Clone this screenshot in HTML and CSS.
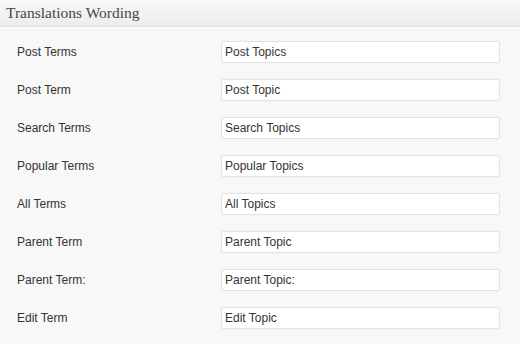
FILE: index.html
```html
<!DOCTYPE html>
<html lang="en">
<head>
    <meta charset="UTF-8">
    <title>Translations Wording</title>
    <link rel="stylesheet" href="styles.css">
</head>
<body>

<div class="postbox">
    <h3 class="postbox-title">Translations Wording</h3>

    <div class="wording-form">
        <label class="field-label" for="w1">Post Terms</label>
        <input class="field-input" id="w1" type="text" value="Post Topics">

        <label class="field-label" for="w2">Post Term</label>
        <input class="field-input" id="w2" type="text" value="Post Topic">

        <label class="field-label" for="w3">Search Terms</label>
        <input class="field-input" id="w3" type="text" value="Search Topics">

        <label class="field-label" for="w4">Popular Terms</label>
        <input class="field-input" id="w4" type="text" value="Popular Topics">

        <label class="field-label" for="w5">All Terms</label>
        <input class="field-input" id="w5" type="text" value="All Topics">

        <label class="field-label" for="w6">Parent Term</label>
        <input class="field-input" id="w6" type="text" value="Parent Topic">

        <label class="field-label" for="w7">Parent Term:</label>
        <input class="field-input" id="w7" type="text" value="Parent Topic:">

        <label class="field-label" for="w8">Edit Term</label>
        <input class="field-input" id="w8" type="text" value="Edit Topic">
    </div>
</div>

</body>
</html>
```

FILE: styles.css
```css
/* Boîte type WordPress */
body {
    margin: 0;
    padding: 0;
    background-color: #f8f8f8;
    font-family: 'Liberation Sans', Arial, sans-serif;
    color: #333;
}

.postbox {
    background-color: #f8f8f8;
}

.postbox-title {
    margin: 0;
    height: 26px;
    padding-left: 6px;
    line-height: 26px;
    font-family: 'Liberation Serif', Georgia, serif;
    font-size: 15.5px;
    font-weight: normal;
    color: #464646;
    background: linear-gradient(to bottom, #f9f9f9, #ececec);
    border-bottom: 1px solid #dfdfdf;
    box-shadow: 0 1px 0 #fff;
}

.wording-form {
    display: grid;
    grid-template-columns: 204px 279px;
    grid-auto-rows: 38px;
    align-items: center;
    padding: 6px 0 0 17px;
}

.field-label {
    font-size: 12px;
}

.field-input {
    box-sizing: border-box;
    height: 22px;
    margin: 0;
    padding: 0 3px;
    font-family: 'Liberation Sans', Arial, sans-serif;
    font-size: 12px;
    color: #333;
    background-color: #fff;
    border: 1px solid #e3e3e3;
    border-radius: 3px;
    box-shadow: 0 0 2px rgba(0, 0, 0, 0.06);
    outline: none;
}
```
